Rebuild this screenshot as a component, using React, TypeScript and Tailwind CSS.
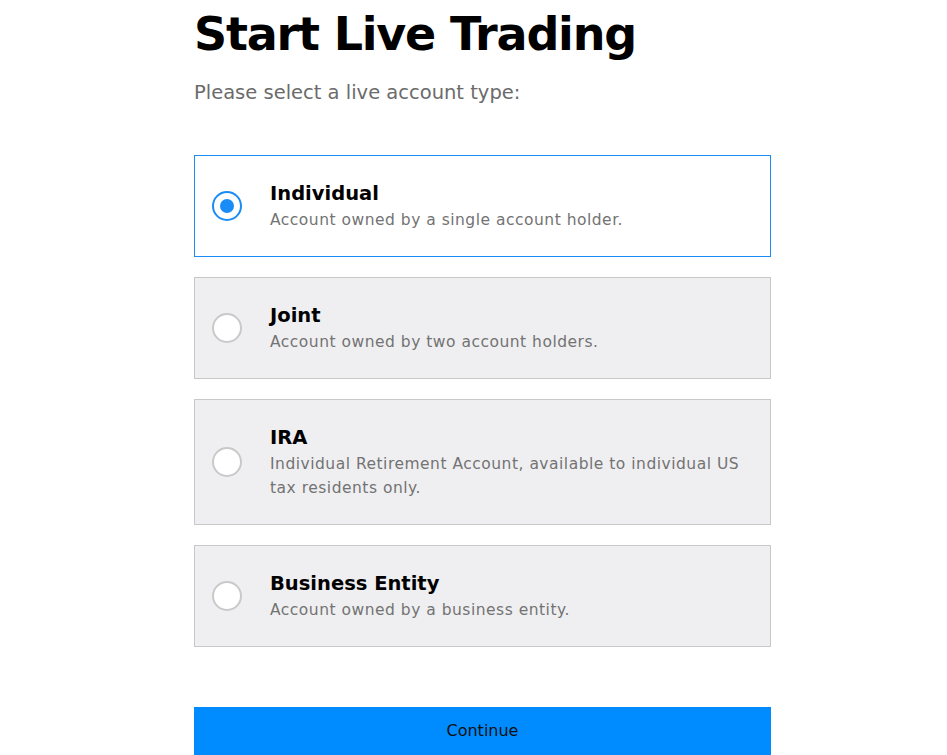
import { useState } from "react";

const accountTypes = [
  { id: "individual", title: "Individual", description: "Account owned by a single account holder." },
  { id: "joint", title: "Joint", description: "Account owned by two account holders." },
  { id: "ira", title: "IRA", description: "Individual Retirement Account, available to individual US tax residents only." },
  { id: "business", title: "Business Entity", description: "Account owned by a business entity." },
];

function Radio({ checked }: { checked: boolean }) {
  return checked ? (
    <span className="flex h-[30px] w-[30px] shrink-0 items-center justify-center rounded-full border-2 border-[#1a8cf5] bg-white">
      <span className="h-[14px] w-[14px] rounded-full bg-[#1a8cf5]" />
    </span>
  ) : (
    <span className="h-[30px] w-[30px] shrink-0 rounded-full border-2 border-[#c9c9c9] bg-white" />
  );
}

export default function App() {
  const [selected, setSelected] = useState("individual");

  return (
    <div className="min-h-screen bg-white font-['DejaVu_Sans',sans-serif]">
      <div className="ml-[194px] w-[577px]">
        <h1 className="pt-[2px] text-[46px] font-bold leading-[64px] tracking-[-1.2px] text-black">Start Live Trading</h1>
        <p className="mt-[13px] text-[19.5px] leading-[28px] text-[#6b6b6b]">Please select a live account type:</p>

        <div className="mt-[48px] flex flex-col gap-5">
          {accountTypes.map((t) => {
            const active = selected === t.id;
            return (
              <button
                key={t.id}
                type="button"
                onClick={() => setSelected(t.id)}
                className={
                  "flex items-center border py-[24px] pl-[17px] pr-[20px] text-left " +
                  (active ? "border-[#1a8cf5] bg-white" : "border-[#c8c8c8] bg-[#efeff1]")
                }
              >
                <Radio checked={active} />
                <div className="ml-[28px] flex max-w-[480px] flex-col">
                  <span className="text-[19.5px] font-bold leading-[28px] text-black">{t.title}</span>
                  <span className="text-[15.5px] leading-[24px] tracking-[0.5px] text-[#737373]">{t.description}</span>
                </div>
              </button>
            );
          })}
        </div>

        <button type="button" className="mt-[60px] h-[48px] w-full bg-[#008cff] text-[16px] text-[#111]">
          Continue
        </button>
      </div>
    </div>
  );
}
